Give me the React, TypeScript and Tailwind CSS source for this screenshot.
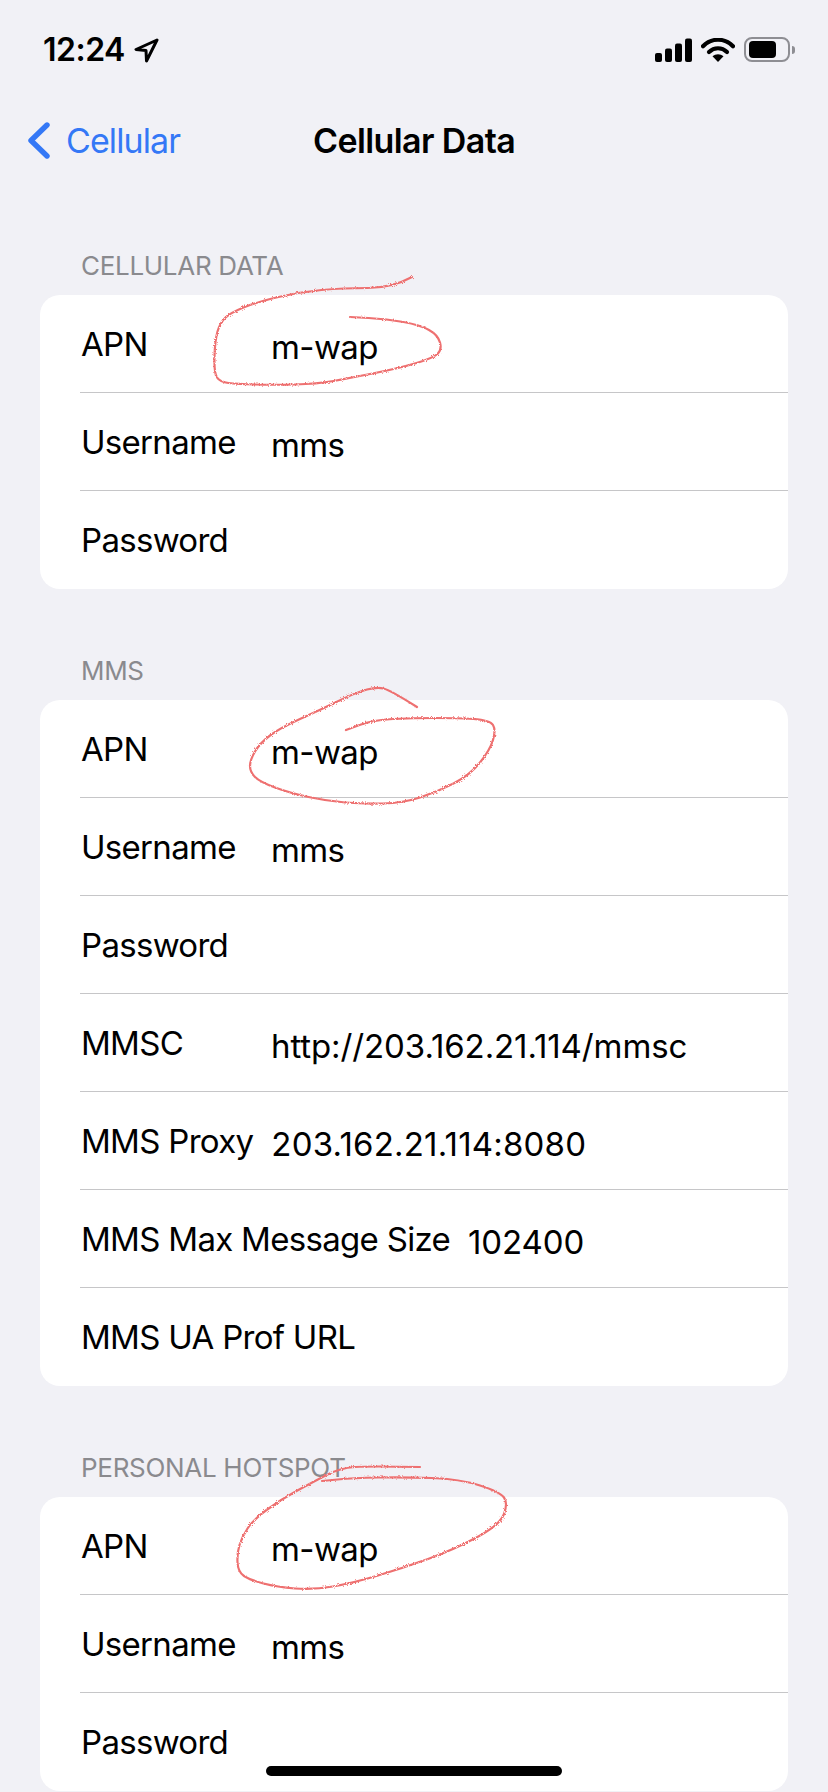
const font = { fontFamily: "Inter, 'Liberation Sans', sans-serif" };

type Pt = [number, number];

// hand-drawn circles, taken point by point from the screenshot
const scribbles: Pt[][] = [
  [[412,277],[392,288],[343,288],[300,292],[257,302],[230,313],[220,323],[215,340],[214,373],[220,382],[237,384],[273,385],[317,384],[350,378],[400,368],[433,358],[442,350],[438,335],[420,325],[387,319],[350,317]],
  [[417,707],[390,690],[377,687],[357,692],[320,710],[280,728],[260,743],[250,760],[250,772],[260,782],[290,793],[327,801],[363,804],[403,803],[437,792],[470,775],[490,750],[496,730],[490,720],[457,718],[413,718],[373,720],[346,730]],
  [[420,1467],[370,1466],[340,1468],[313,1482],[280,1500],[253,1520],[242,1537],[237,1553],[238,1572],[250,1580],[277,1587],[313,1590],[353,1583],[403,1568],[453,1550],[500,1525],[508,1503],[500,1492],[460,1479],[403,1477],[353,1478],[322,1481]],
];

function smooth(pts: Pt[]) {
  let d = `M${pts[0][0]} ${pts[0][1]}`;
  for (let i = 1; i < pts.length - 1; i++) {
    const mx = (pts[i][0] + pts[i + 1][0]) / 2;
    const my = (pts[i][1] + pts[i + 1][1]) / 2;
    d += ` Q${pts[i][0]} ${pts[i][1]} ${mx} ${my}`;
  }
  const last = pts[pts.length - 1];
  return d + ` L${last[0]} ${last[1]}`;
}

function StatusBar() {
  return (
    <div className="flex h-[100px] items-start justify-between pt-[37px] pl-[43px] pr-[33px]">
      <div className="flex items-center gap-[9px]">
        <span className="text-[32px] leading-[26px] font-semibold tracking-[-0.5px] text-black">12:24</span>
        <svg width="25" height="25" viewBox="0 0 25 25" fill="none">
          <path d="M23 2 2 11.5l10 1L12.5 23z" stroke="#000" strokeWidth="3" strokeLinejoin="round" />
        </svg>
      </div>
      <div className="flex items-center">
        <svg width="38" height="24" viewBox="0 0 38 24" fill="#000">
          <rect x="0" y="15" width="7" height="9" rx="2" />
          <rect x="10" y="10.5" width="7" height="13.5" rx="2" />
          <rect x="20" y="5.5" width="7" height="18.5" rx="2" />
          <rect x="30" y="0.5" width="7" height="23.5" rx="2" />
        </svg>
        <svg className="ml-[8px]" width="34" height="24" viewBox="0 0 34 24" fill="none">
          <path d="M2 8.2C10.5 -0.4 23.5 -0.4 32 8.2" stroke="#000" strokeWidth="4.2" strokeLinecap="round" />
          <path d="M8 14c5.2-5 12.8-5 18 0" stroke="#000" strokeWidth="4.2" strokeLinecap="round" />
          <path d="M11.5 18.2c3-2.7 8-2.7 11 0L17 24z" fill="#000" />
        </svg>
        <div className="ml-[9px] flex items-center">
          <div className="flex h-[25px] w-[46px] items-center rounded-[8px] border-2 border-[#8e8e93] pl-[3px]">
            <div className="h-[17px] w-[27px] rounded-[4px] bg-black" />
          </div>
          <div className="ml-[2px] h-[8px] w-[3px] rounded-r-[3px] bg-[#8e8e93]" />
        </div>
      </div>
    </div>
  );
}

function NavBar() {
  return (
    <div className="relative flex h-[80px] items-center pl-[27px]">
      <svg width="23" height="37" viewBox="0 0 23 37" fill="none">
        <path d="M20 3 4 18.5 20 34" stroke="#3478f6" strokeWidth="5.4" strokeLinecap="round" strokeLinejoin="round" />
      </svg>
      <span className="ml-[16px] text-[34px] tracking-[-0.9px] text-[#3478f6]">Cellular</span>
      <span className="absolute left-[313px] text-[34px] font-semibold tracking-[-0.6px] text-black">Cellular Data</span>
    </div>
  );
}

type RowData = { label: string; value?: string; spacing?: string };

function Row({ label, value, spacing = "tracking-[-0.6px]", last }: RowData & { last?: boolean }) {
  return (
    <div className="relative flex h-[98px] items-center pl-[41px]">
      <span className="mt-[2px] min-w-[172px] text-[33px] tracking-[-0.7px] whitespace-nowrap text-black">{label}</span>
      {value && <span className={`mt-[7px] ml-[18px] text-[33px] whitespace-nowrap text-black ${spacing}`}>{value}</span>}
      {!last && <div className="absolute right-0 bottom-0 left-[40px] h-[1px] bg-[#c6c6c8]" />}
    </div>
  );
}

function Section({ title, rows }: { title: string; rows: RowData[] }) {
  return (
    <div className="mb-[66px]">
      <div className="mb-[13px] h-[32px] pl-[81px] text-[26px] leading-[32px] tracking-[-0.3px] text-[#8a8a8e]">{title}</div>
      <div className="mx-[40px] overflow-hidden rounded-[20px] bg-white">
        {rows.map((r, i) => (
          <Row key={i} {...r} last={i === rows.length - 1} />
        ))}
      </div>
    </div>
  );
}

const base: RowData[] = [
  { label: "APN", value: "m-wap" },
  { label: "Username", value: "mms" },
  { label: "Password" },
];

export default function App() {
  return (
    <div className="relative h-[1792px] w-[828px] overflow-hidden bg-[#f1f1f6]" style={font}>
      <StatusBar />
      <NavBar />
      <div className="pt-[70px]">
        <Section title="CELLULAR DATA" rows={base} />
        <Section
          title="MMS"
          rows={[
            ...base,
            { label: "MMSC", value: "http://203.162.21.114/mmsc", spacing: "tracking-[-0.1px]" },
            { label: "MMS Proxy", value: "203.162.21.114:8080", spacing: "tracking-[0.2px]" },
            { label: "MMS Max Message Size", value: "102400", spacing: "tracking-[-0.1px]" },
            { label: "MMS UA Prof URL" },
          ]}
        />
        <Section title="PERSONAL HOTSPOT" rows={base} />
      </div>
      {/* pen marks sit on top of the screenshot */}
      <svg className="absolute top-0 left-0" width="828" height="1792" fill="none">
        <defs>
          <filter id="pencil" x="-5%" y="-5%" width="110%" height="110%">
            <feTurbulence type="fractalNoise" baseFrequency="0.9" numOctaves="2" seed="3" />
            <feDisplacementMap in="SourceGraphic" scale="3" />
          </filter>
        </defs>
        {scribbles.map((s, i) => (
          <path key={i} d={smooth(s)} stroke="#ee7070" strokeWidth="2.2" strokeLinecap="round" filter="url(#pencil)" />
        ))}
      </svg>
      <div className="absolute top-[1766px] left-[266px] h-[10px] w-[296px] rounded-full bg-black" />
    </div>
  );
}
